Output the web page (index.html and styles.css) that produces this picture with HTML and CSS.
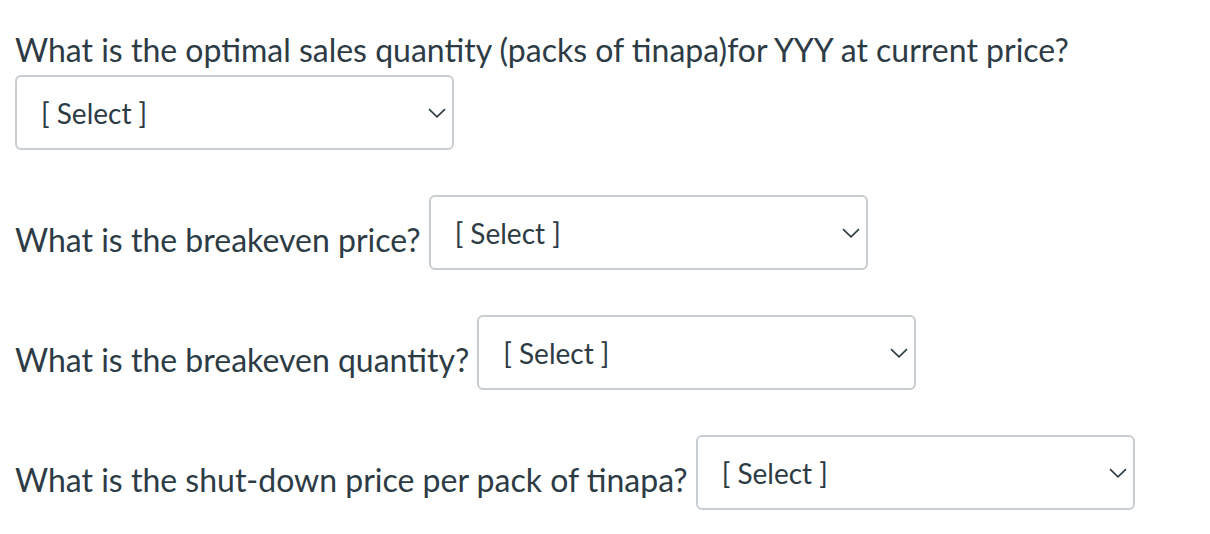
FILE: index.html
```html
<!DOCTYPE html>
<html lang="en">
<head>
    <meta charset="UTF-8">
    <title>Quiz Questions</title>
    <link rel="stylesheet" href="styles.css">
</head>
<body>
    <div class="quiz">
        <div class="question stacked">
            <p class="label">What is the optimal sales quantity (packs of tinapa)for YYY at current price?</p>
            <div class="select">
                <span>[ Select ]</span>
                <svg class="chevron" width="18" height="10" viewBox="0 0 18 10"><path d="M1 1.2 L9 8.8 L17 1.2" fill="none" stroke="#2d3b45" stroke-width="1.6"/></svg>
            </div>
        </div>

        <div class="question inline">
            <p class="label">What is the breakeven price?</p>
            <div class="select">
                <span>[ Select ]</span>
                <svg class="chevron" width="18" height="10" viewBox="0 0 18 10"><path d="M1 1.2 L9 8.8 L17 1.2" fill="none" stroke="#2d3b45" stroke-width="1.6"/></svg>
            </div>
        </div>

        <div class="question inline">
            <p class="label">What is the breakeven quantity?</p>
            <div class="select">
                <span>[ Select ]</span>
                <svg class="chevron" width="18" height="10" viewBox="0 0 18 10"><path d="M1 1.2 L9 8.8 L17 1.2" fill="none" stroke="#2d3b45" stroke-width="1.6"/></svg>
            </div>
        </div>

        <div class="question inline">
            <p class="label">What is the shut-down price per pack of tinapa?</p>
            <div class="select">
                <span>[ Select ]</span>
                <svg class="chevron" width="18" height="10" viewBox="0 0 18 10"><path d="M1 1.2 L9 8.8 L17 1.2" fill="none" stroke="#2d3b45" stroke-width="1.6"/></svg>
            </div>
        </div>
    </div>
</body>
</html>
```

FILE: styles.css
```css
body {
    margin: 0;
    font-family: Lato, "Liberation Sans", sans-serif;
    color: #2d3b45;
    background-color: #fff;
}

.quiz {
    padding: 31px 15px 0 15px;
}

.label {
    margin: 0;
    font-size: 32px;
    line-height: 38px;
}

.question.stacked .label {
    margin-bottom: 6px;
}

.question.inline {
    display: flex;
    align-items: flex-end;
    gap: 8px;
    margin-top: 45px;
}

.question.inline .label {
    margin-bottom: 11px;
}

.select {
    width: 439px;
    height: 75px;
    box-sizing: border-box;
    border: 2px solid #c7cdd1;
    border-radius: 6px;
    display: flex;
    align-items: center;
    justify-content: space-between;
    padding: 0 6px 0 24px;
    font-size: 28px;
}

.chevron {
    display: block;
}
```
